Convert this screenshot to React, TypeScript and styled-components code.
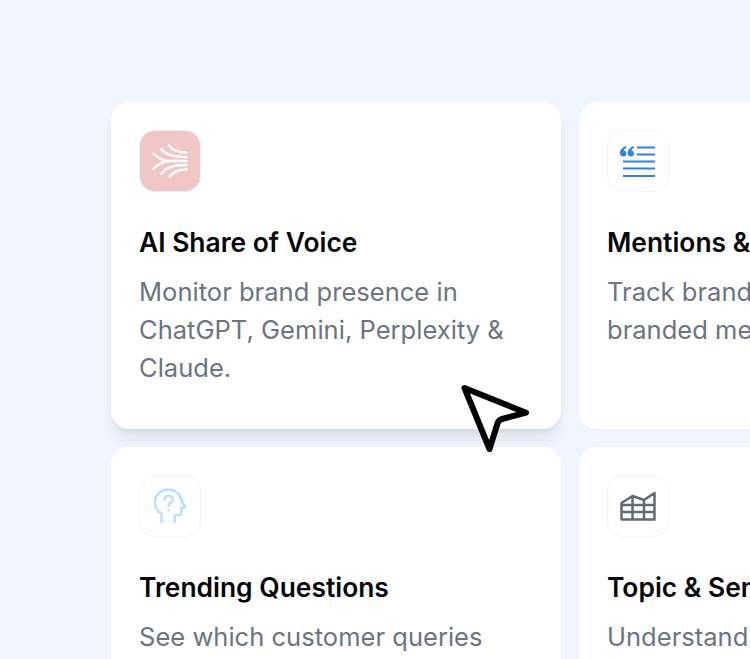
import styled, { createGlobalStyle } from 'styled-components';

const GlobalStyle = createGlobalStyle`
  html, body {
    margin: 0;
    height: 100%;
    overflow: hidden;
    background: #eff6ff;
  }
`;

const Page = styled.div`
  position: relative;
  width: 750px;
  height: 659px;
  overflow: hidden;
  padding: 102px 0 0 111px;
  box-sizing: border-box;
  font-family: Inter, 'Liberation Sans', sans-serif;
`;

const Grid = styled.div`
  display: grid;
  grid-template-columns: 450px 450px;
  grid-auto-rows: 327px;
  gap: 18px;
`;

const Card = styled.div<{ $raised?: boolean }>`
  box-sizing: border-box;
  padding: 28px;
  background: #ffffff;
  border-radius: 18px;
  box-shadow: ${(p) =>
    p.$raised ? '0 12px 16px -3px rgba(15, 23, 42, 0.09), 0 4px 6px -4px rgba(15, 23, 42, 0.1)' : 'none'};
`;

const IconBox = styled.div<{ $tinted?: boolean }>`
  box-sizing: border-box;
  width: 62px;
  height: 62px;
  display: flex;
  align-items: center;
  justify-content: center;
  border-radius: 16px;
  border: 1.5px solid ${(p) => (p.$tinted ? '#e9eef8' : '#f1f4fb')};
  background: ${(p) => (p.$tinted ? '#f0c6c7' : '#ffffff')};
`;

const Title = styled.h3`
  margin: 32px 0 0;
  font-size: 26.4px;
  line-height: 36px;
  font-weight: 600;
  color: #05070a;
  white-space: nowrap;
`;

const Description = styled.p`
  margin: 13px 0 0;
  font-size: 25.5px;
  line-height: 38px;
  font-weight: 400;
  letter-spacing: 0.03px;
  color: #6b7480;
  white-space: nowrap;
`;

const Cursor = styled.svg`
  position: absolute;
  left: 455px;
  top: 378px;
`;

const VoiceIcon = () => (
  <svg width="36" height="34" viewBox="0 0 36 34" fill="none" stroke="#ffffff" strokeWidth="2.4" strokeLinecap="round">
    <path d="M1.5 9.5 C6 14.5 11 16.5 17 17 H34.5" />
    <path d="M9 5 C13 10.5 20 13 34.5 13" />
    <path d="M17 1.5 C21 6.5 27 8.5 34.5 8.5" />
    <path d="M1.5 25 C6 20 11 17.5 17 17" />
    <path d="M9.5 30 C13 23.5 21 21 34.5 21" />
    <path d="M17.5 32.5 C21 28 27 25.5 34.5 25.5" />
  </svg>
);

const QuoteIcon = () => (
  <svg width="36" height="33" viewBox="0 0 36 33" fill="none">
    <path
      d="M5.8 1 C2.5 2.4 0 5 0 8 C0 10.2 1.4 11.5 3.2 11.5 C5 11.5 6.4 10.2 6.4 8.4 C6.4 6.8 5.2 5.6 3.8 5.5 C4.2 4.4 5.2 3.4 6.6 2.6 Z M13.4 1 C10.1 2.4 7.6 5 7.6 8 C7.6 10.2 9 11.5 10.8 11.5 C12.6 11.5 14 10.2 14 8.4 C14 6.8 12.8 5.6 11.4 5.5 C11.8 4.4 12.8 3.4 14.2 2.6 Z"
      fill="#2f80ed"
    />
    <path d="M17 2.5 H35 M17 9.5 H35 M3 16.5 H35 M3 23.5 H35 M3 31 H35" stroke="#2f80ed" strokeWidth="2.2" />
  </svg>
);

const HeadIcon = () => (
  <svg width="34" height="36" viewBox="0 0 36 38" fill="none" stroke="#b5e0fa" strokeWidth="2.5" strokeLinecap="round" strokeLinejoin="round">
    <path d="M9 36 V27 C4 24 2 20 2 15 C2 7 8.5 1.5 16.5 1.5 C24 1.5 29 6.5 30 13 L33.5 19 C34 20 33.5 21 32 21 H30 V25 C30 27.5 28.5 29 26 29 H23 V36" />
    <path d="M12 12.5 C12 9.5 14 8 16.5 8 C19 8 21 9.5 21 12 C21 15.5 16.5 15.5 16.5 19" />
    <path d="M16.5 23.5 V23.6" />
  </svg>
);

const ChartIcon = () => (
  <svg width="36" height="30" viewBox="0 0 36 30" fill="none" stroke="#626b75" strokeWidth="2.5" strokeLinejoin="round">
    <path d="M1.5 28.5 V12 L12.5 5 L24 9 L34.5 2 V28.5 Z" />
    <path d="M1.5 14 H34.5 M1.5 21 H34.5 M12.5 6 V28.5 M24 9 V28.5" />
  </svg>
);

type FeatureProps = {
  icon: React.ReactNode;
  title: string;
  lines: string[];
  raised?: boolean;
  tinted?: boolean;
};

const Feature = ({ icon, title, lines, raised, tinted }: FeatureProps) => (
  <Card $raised={raised}>
    <IconBox $tinted={tinted}>{icon}</IconBox>
    <Title>{title}</Title>
    <Description>
      {lines.map((line) => (
        <div key={line}>{line}</div>
      ))}
    </Description>
  </Card>
);

const App = () => (
  <Page>
    <GlobalStyle />
    <Grid>
      <Feature
        raised
        tinted
        icon={<VoiceIcon />}
        title="AI Share of Voice"
        lines={['Monitor brand presence in', 'ChatGPT, Gemini, Perplexity &', 'Claude.']}
      />
      <Feature
        icon={<QuoteIcon />}
        title="Mentions & Citations"
        lines={['Track brand citations and', 'branded mentions.']}
      />
      <Feature
        icon={<HeadIcon />}
        title="Trending Questions"
        lines={['See which customer queries']}
      />
      <Feature
        icon={<ChartIcon />}
        title="Topic & Sentiment"
        lines={['Understand how people feel']}
      />
    </Grid>
    <Cursor width="80" height="84" viewBox="0 0 80 84" fill="none">
      <path
        d="M9.5 10 L71 34.7 L47 41 Q43.5 42 42.5 45.5 L34.5 71 Z"
        fill="#ffffff"
        stroke="#000000"
        strokeWidth="6"
        strokeLinejoin="round"
      />
    </Cursor>
  </Page>
);

export default App;
